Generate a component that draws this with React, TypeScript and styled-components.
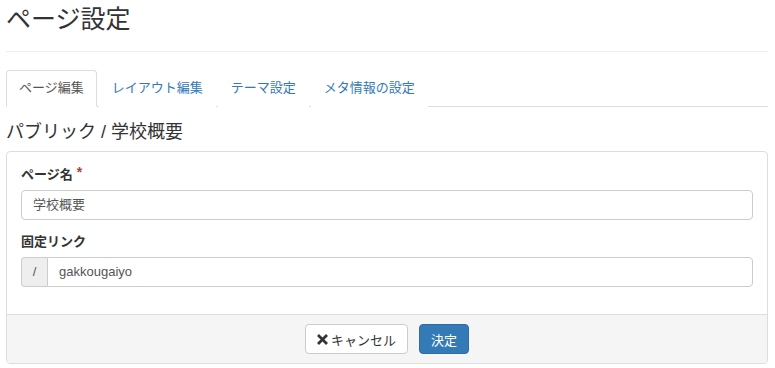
import React from 'react'
import styled, { createGlobalStyle } from 'styled-components'

const GlobalStyle = createGlobalStyle`
  html, body {
    margin: 0;
    padding: 0;
    background: #fff;
  }
  body {
    font-family: "Liberation Sans", "Noto Sans CJK JP", sans-serif;
    font-size: 13px;
    color: #333;
  }
  * {
    box-sizing: border-box;
  }
`

const Page = styled.div`
  padding: 0 7px 0 6px;
`

const PageTitle = styled.h1`
  margin: 0;
  padding-top: 4px;
  height: 52px;
  font-size: 25px;
  font-weight: normal;
  line-height: 30px;
  border-bottom: 1px solid #eee;
`

const Tabs = styled.ul`
  display: flex;
  list-style: none;
  margin: 18px 0 0;
  padding: 0;
  border-bottom: 1px solid #ddd;
`

const Tab = styled.li<{ $active?: boolean }>`
  margin-right: 2px;
  margin-bottom: -1px;
  padding: 8px 12px 9px;
  line-height: 18px;
  border: 1px solid ${(p) => (p.$active ? '#ddd' : 'transparent')};
  border-bottom-color: ${(p) => (p.$active ? '#fff' : 'transparent')};
  border-radius: 4px 4px 0 0;
  background: #fff;
  color: ${(p) => (p.$active ? '#555' : '#337ab7')};
  cursor: pointer;
`

const SectionTitle = styled.h3`
  margin: 0;
  padding-top: 14px;
  height: 44px;
  font-size: 18px;
  font-weight: normal;
  line-height: 22px;
`

const Panel = styled.div`
  border: 1px solid #ddd;
  border-radius: 4px;
  background: #fff;
  overflow: hidden;
`

const PanelBody = styled.div`
  padding: 14px 14px 27px;
`

const FieldGroup = styled.div`
  & + & {
    margin-top: 13px;
  }
`

const Label = styled.label`
  display: block;
  font-weight: bold;
  line-height: 18px;
  margin-bottom: 6px;
`

const Required = styled.span`
  color: #a94442;
  margin-left: 4px;
  font-size: 14px;
  vertical-align: top;
  position: relative;
  top: -3px;
`

const TextBox = styled.div`
  flex: 1;
  height: 30px;
  padding: 0 11px;
  line-height: 28px;
  border: 1px solid #ccc;
  border-radius: 4px;
  color: #555;
  background: #fff;
`

const InputGroup = styled.div`
  display: flex;
  & > ${TextBox} {
    border-radius: 0 4px 4px 0;
  }
`

const Addon = styled.span`
  width: 26px;
  height: 30px;
  line-height: 28px;
  text-align: center;
  border: 1px solid #ccc;
  border-right: 0;
  border-radius: 4px 0 0 4px;
  background: #eee;
  color: #555;
`

const PanelFooter = styled.div`
  display: flex;
  justify-content: center;
  gap: 11px;
  padding: 9px 14px 9px;
  background: #f5f5f5;
  border-top: 1px solid #ddd;
`

const Button = styled.button<{ $primary?: boolean }>`
  display: inline-flex;
  align-items: center;
  gap: 3px;
  height: 30px;
  padding: 0 11px;
  font-family: inherit;
  font-size: 13px;
  border-radius: 4px;
  border: 1px solid ${(p) => (p.$primary ? '#2e6da4' : '#ccc')};
  background: ${(p) => (p.$primary ? '#337ab7' : '#fff')};
  color: ${(p) => (p.$primary ? '#fff' : '#333')};
  cursor: pointer;
`

function CrossIcon() {
  return (
    <svg width="11" height="11" viewBox="0 0 11 11">
      <path d="M2 2 L9 9 M9 2 L2 9" stroke="#333" strokeWidth="2.8" strokeLinecap="square" />
    </svg>
  )
}

export default function App() {
  return (
    <Page>
      <GlobalStyle />
      <PageTitle>ページ設定</PageTitle>
      <Tabs>
        <Tab $active>ページ編集</Tab>
        <Tab>レイアウト編集</Tab>
        <Tab>テーマ設定</Tab>
        <Tab>メタ情報の設定</Tab>
      </Tabs>
      <SectionTitle>パブリック / 学校概要</SectionTitle>
      <Panel>
        <PanelBody>
          <FieldGroup>
            <Label>
              ページ名<Required>*</Required>
            </Label>
            <TextBox>学校概要</TextBox>
          </FieldGroup>
          <FieldGroup>
            <Label>固定リンク</Label>
            <InputGroup>
              <Addon>/</Addon>
              <TextBox>gakkougaiyo</TextBox>
            </InputGroup>
          </FieldGroup>
        </PanelBody>
        <PanelFooter>
          <Button>
            <CrossIcon />
            キャンセル
          </Button>
          <Button $primary>決定</Button>
        </PanelFooter>
      </Panel>
    </Page>
  )
}
